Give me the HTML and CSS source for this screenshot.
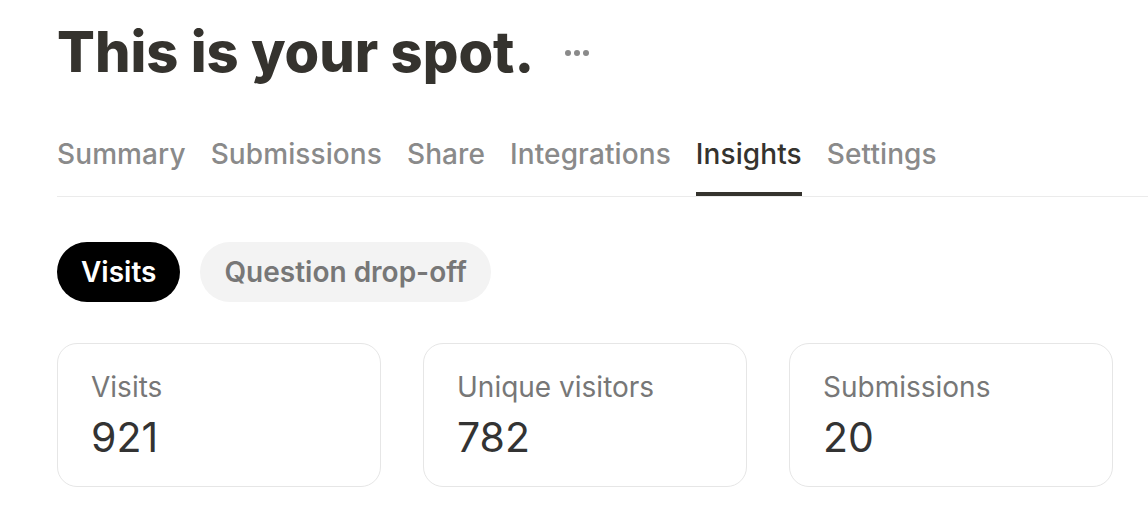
FILE: index.html
```html
<!DOCTYPE html>
<html lang="en">
<head>
<meta charset="utf-8">
<title>Insights</title>
<link rel="stylesheet" href="styles.css">
</head>
<body>
<main class="page">
  <header class="title-row">
    <h1 class="title">This is your spot.</h1>
    <button class="more" aria-label="More options">
      <svg width="26" height="8" viewBox="0 0 26 8"><circle cx="4" cy="4" r="3" fill="#8a8a8a"/><circle cx="13" cy="4" r="3" fill="#8a8a8a"/><circle cx="22" cy="4" r="3" fill="#8a8a8a"/></svg>
    </button>
  </header>
  <nav class="tabs">
    <a class="tab">Summary</a>
    <a class="tab">Submissions</a>
    <a class="tab">Share</a>
    <a class="tab">Integrations</a>
    <a class="tab active">Insights</a>
    <a class="tab">Settings</a>
  </nav>
  <div class="pills">
    <button class="pill active">Visits</button>
    <button class="pill">Question drop-off</button>
  </div>
  <section class="cards">
    <div class="card"><div class="label">Visits</div><div class="value">921</div></div>
    <div class="card"><div class="label">Unique visitors</div><div class="value">782</div></div>
    <div class="card"><div class="label">Submissions</div><div class="value">20</div></div>
  </section>
</main>
</body>
</html>
```
FILE: styles.css
```css
* { box-sizing: border-box; }
html, body { margin: 0; background: #fff; }
body { font-family: Inter, "Noto Sans", sans-serif; color: #35332e; overflow: hidden; }
.page { padding: 24px 37px 0 57px; }
.title-row { display: flex; align-items: center; gap: 30px; height: 56px; }
.title { margin: 0; font-size: 56px; font-weight: 800; letter-spacing: 0; color: #35332e; line-height: 56px; }
.more { border: 0; background: none; padding: 0; display: flex; margin-top: 2px; }
.tabs { display: flex; gap: 25px; margin-top: 57px; border-bottom: 1.5px solid #ebebeb; margin-right: -37px; }
.tab { font-size: 28px; font-weight: 500; letter-spacing: 0.1px; color: #8a8a8a; padding-bottom: 21px; border-bottom: 4px solid transparent; line-height: 34px; }
.tab.active { color: #35332e; border-bottom-color: #35332e; }
.pills { display: flex; gap: 20px; margin-top: 45px; }
.pill { border: 0; height: 60px; border-radius: 30px; padding: 0 24px; font-family: inherit; font-size: 28px; font-weight: 600; background: #f3f3f3; color: #777; }
.pill.active { background: #000; color: #fff; }
.cards { display: grid; grid-template-columns: repeat(3, 324px); gap: 42px; margin-top: 41px; }
.card { height: 144px; border: 1.5px solid #e6e6e6; border-radius: 20px; padding: 26px 33px 0; }
.label { font-size: 28px; color: #777; line-height: 34px; }
.value { font-size: 41px; color: #333; line-height: 50px; margin-top: 8px; }
```
